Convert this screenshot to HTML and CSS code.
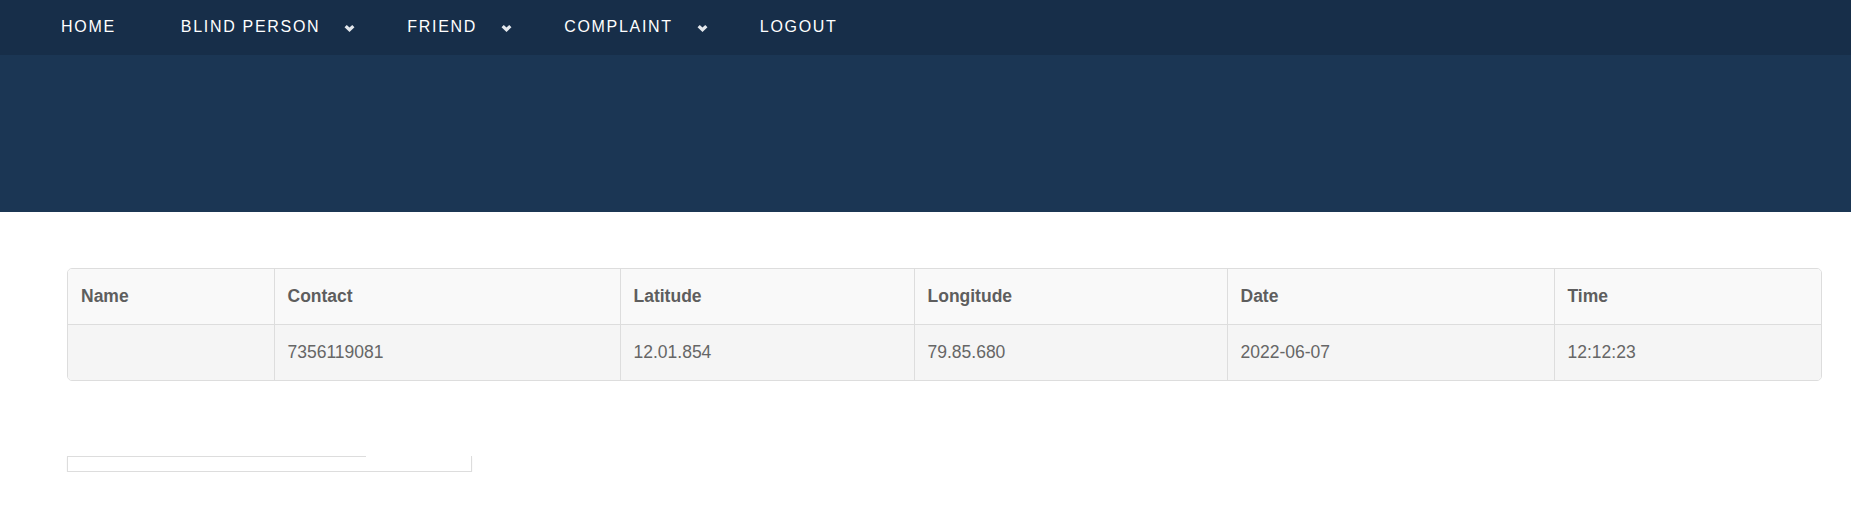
FILE: index.html
```html
<!DOCTYPE html>
<html>
<head>
<meta charset="utf-8">
<link rel="stylesheet" href="styles.css">
</head>
<body>
<nav class="topnav">
  <ul class="menu">
    <li class="item item-home"><span class="label">HOME</span></li>
    <li class="item"><span class="label">BLIND PERSON</span><svg class="chev" viewBox="0 0 10 7"><path d="M1.5 1.8 L5 5 L8.5 1.8" /></svg></li>
    <li class="item"><span class="label">FRIEND</span><svg class="chev" viewBox="0 0 10 7"><path d="M1.5 1.8 L5 5 L8.5 1.8" /></svg></li>
    <li class="item"><span class="label">COMPLAINT</span><svg class="chev" viewBox="0 0 10 7"><path d="M1.5 1.8 L5 5 L8.5 1.8" /></svg></li>
    <li class="item"><span class="label">LOGOUT</span></li>
  </ul>
</nav>
<header class="banner"></header>
<main class="content">
  <div class="table-wrap">
    <table class="data">
      <thead>
        <tr><th>Name</th><th>Contact</th><th>Latitude</th><th>Longitude</th><th>Date</th><th>Time</th></tr>
      </thead>
      <tbody>
        <tr><td></td><td>7356119081</td><td>12.01.854</td><td>79.85.680</td><td>2022-06-07</td><td>12:12:23</td></tr>
      </tbody>
    </table>
  </div>
  <div class="empty-box"></div>
</main>
</body>
</html>
```
FILE: styles.css
```css
* { box-sizing: border-box; }
html, body { margin: 0; padding: 0; background: #fff; }
body { font-family: "Liberation Sans", Arial, sans-serif; }

.topnav {
  height: 55px;
  background: #172e49;
}
.menu {
  list-style: none;
  margin: 0;
  padding: 0 0 0 61px;
  height: 55px;
  display: flex;
  align-items: center;
}
.item {
  display: flex;
  align-items: center;
  margin-right: 52px;
  color: #fff;
  font-size: 16px;
  letter-spacing: 1.7px;
  margin-top: -2px;
}
.item-home { margin-right: 65px; }
.chev {
  width: 11px;
  height: 8px;
  margin-left: 24px;
  fill: none;
  stroke: #e3e7ec;
  stroke-width: 3;
  stroke-linecap: butt;
  stroke-linejoin: miter;
  margin-top: 2px;
}

.banner {
  height: 157px;
  background: #1b3654;
}

.content {
  padding: 56px 29px 0 67px;
}
.table-wrap {
  border: 1px solid #ddd;
  border-radius: 5px;
  overflow: hidden;
}
.data {
  width: 100%;
  border-collapse: collapse;
  font-size: 17.5px;
  color: #666;
}
.data th, .data td {
  text-align: left;
  padding: 15px 13px;
  line-height: 25px;
  border-left: 1px solid #ddd;
}
.data th:first-child, .data td:first-child { border-left: none; }
.data th {
  background: #f9f9f9;
  font-weight: bold;
  color: #5e5e5e;
  border-bottom: 1px solid #ddd;
}
.data td { background: #f5f5f5; }
.data th:nth-child(1) { width: 206px; }
.data th:nth-child(2) { width: 346px; }
.data th:nth-child(3) { width: 294px; }
.data th:nth-child(4) { width: 313px; }
.data th:nth-child(5) { width: 327px; }

.empty-box {
  margin-top: 75px;
  width: 405px;
  height: 16px;
  border: 1px solid #ddd;
  border-top: none;
  background: linear-gradient(#ddd, #ddd) no-repeat left top / 298px 1px;
  box-shadow: 0 1px 2px rgba(0,0,0,0.05);
}
```
